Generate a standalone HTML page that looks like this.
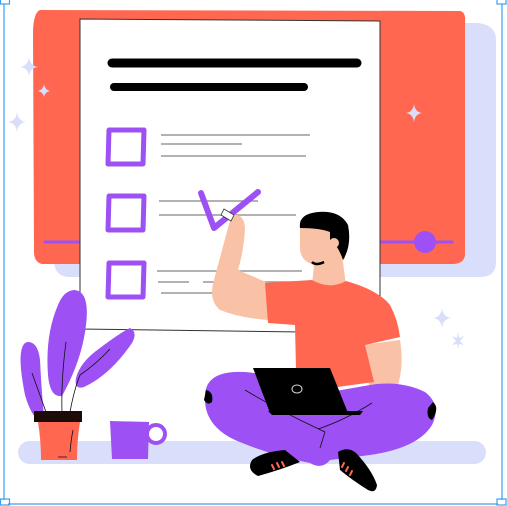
<!DOCTYPE html>
<html><head><meta charset="utf-8"><style>
html,body{margin:0;padding:0;background:#fff;width:507px;height:506px;overflow:hidden}
svg{display:block}
</style></head><body>
<svg width="507" height="506" viewBox="0 0 507 506" xmlns="http://www.w3.org/2000/svg">
<g stroke="#3aa0f0" stroke-width="1.2" fill="none">
<line x1="4" y1="4" x2="4" y2="500"/>
<line x1="502" y1="4" x2="502" y2="500"/>
<line x1="8" y1="504" x2="498" y2="504"/>
<rect x="0.5" y="-2" width="9" height="6"/>
<rect x="497" y="-2" width="9" height="6"/>
<rect x="0.5" y="499" width="9" height="6"/>
<rect x="497" y="499" width="9" height="6"/>
</g>
<path d="M56 30 Q60 22 80 22 L478 23 Q496 25 496 40 L496 262 Q496 277 480 277 L70 277 Q55 277 54 262 Z" fill="#d9dffa"/>
<path d="M40 10 L460 11 Q466 12 465 22 L465 255 Q464 264 452 264 L42 264 Q34 262 34 252 L33 30 Q34 12 40 10 Z" fill="#ff6750"/>
<g fill="#d9dffa">
<path d="M29 57 Q30 66 38 67 Q30 68 29 76 Q28 68 20 67 Q28 66 29 57Z"/>
<path d="M44 84 Q45 90 50 91 Q45 92 44 97 Q43 92 38 91 Q43 90 44 84Z"/>
<path d="M17 112 Q18 121 26 122 Q18 123 17 132 Q16 123 8 122 Q16 121 17 112Z"/>
<path d="M414 104 Q415 112 422 113 Q415 114 414 122 Q413 114 406 113 Q413 112 414 104Z"/>
<path d="M442 308 Q443 317 451 318 Q443 319 442 328 Q441 319 433 318 Q441 317 442 308Z"/>
<path d="M458 331 L459 338 L464 336 L460 341 L464 345 L459 344 L458 349 L457 344 L452 345 L456 341 L452 336 L457 338Z"/>
</g>
<line x1="45" y1="242" x2="452" y2="242" stroke="#9d50f3" stroke-width="3" stroke-linecap="round"/>
<circle cx="425" cy="242" r="11" fill="#9d50f3"/>
<path d="M80 19 L380 21 L380 333 L80 329 Z" fill="#fff" stroke="#333" stroke-width="1"/>
<line x1="112" y1="63" x2="357" y2="63" stroke="#000" stroke-width="9" stroke-linecap="round"/>
<line x1="114" y1="87" x2="304" y2="87" stroke="#000" stroke-width="8" stroke-linecap="round"/>
<g fill="none" stroke="#9d50f3" stroke-width="5" stroke-linejoin="round">
<path d="M109 130 L144 130 L143 164 L108 164 Z"/>
<path d="M109 196 L144 196 L143 230 L108 230 Z"/>
<path d="M109 263 L144 263 L143 297 L108 297 Z"/>
</g>
<g stroke="#999" stroke-width="1.6">
<line x1="161" y1="135" x2="310" y2="135"/>
<line x1="161" y1="144" x2="242" y2="144"/>
<line x1="161" y1="156" x2="306" y2="156"/>
<line x1="159" y1="201" x2="258" y2="201"/>
<line x1="159" y1="215" x2="296" y2="215"/>
<line x1="157" y1="271" x2="302" y2="271"/>
<line x1="158" y1="282" x2="189" y2="282"/>
<line x1="203" y1="282" x2="300" y2="282"/>
<line x1="161" y1="293" x2="300" y2="293"/>
</g>
<path d="M201 193 L214 228 L258 192" fill="none" stroke="#9d50f3" stroke-width="6" stroke-linecap="round" stroke-linejoin="round"/>
<rect x="18" y="441" width="468" height="23" rx="11.5" fill="#d9dffa"/>
<path d="M75 290 Q90 292 86 325 Q82 360 62 396 Q50 398 48 375 Q45 335 58 305 Q64 290 75 290Z" fill="#9d50f3"/>
<path d="M28 342 Q38 342 40 360 Q42 400 45 425 Q32 420 25 395 Q18 360 22 348 Q24 342 28 342Z" fill="#9d50f3"/>
<path d="M130 328 Q138 332 132 343 Q110 375 84 387 Q74 390 76 378 Q80 362 100 348 Q120 333 130 328Z" fill="#9d50f3"/>
<g stroke="#111" stroke-width="0.8" fill="none">
<path d="M32 373 L46 412"/><path d="M66 342 Q61 380 62 412"/><path d="M110 349 Q95 365 80 375 Q74 390 70 412"/>
</g>
<rect x="34" y="411" width="48" height="11" fill="#1c0b06"/>
<path d="M38 422 L80 422 Q77 440 77 460 L41 460 Q41 440 38 422Z" fill="#ff6750"/>
<path d="M73 430 Q71 440 70 452 M58 457 L67 457" stroke="#111" stroke-width="0.8" fill="none"/>
<circle cx="156" cy="434" r="9" fill="none" stroke="#9d50f3" stroke-width="4"/>
<path d="M110 421 L149 422 L148 459 L112 459 Z" fill="#9d50f3"/>
<path d="M232 215 Q244 213 245 228 Q244 250 238 270 L268 283 L268 320 Q240 318 220 310 Q208 300 214 280 Q222 250 228 228 Z" fill="#f9c2a6"/>
<path d="M224 209 L234 215 L231 221 L221 215 Z" fill="#fff" stroke="#333" stroke-width="0.8"/>
<path d="M315 255 L342 255 L346 285 L312 285 Z" fill="#f9c2a6"/>
<path d="M300 222 Q303 213 325 214 Q345 216 345 232 L345 258 Q338 267 320 266 Q302 264 300 250 Z" fill="#f9c2a6"/>
<path d="M300 228 Q298 214 318 212 Q340 210 348 225 Q352 245 343 260 Q338 245 330 240 L330 232 Q320 228 300 228Z" fill="#000"/>
<circle cx="334" cy="243" r="5" fill="#f9c2a6"/>
<path d="M312 262 Q316 266 324 262" stroke="#000" stroke-width="2.5" fill="none"/>
<path d="M362 345 L400 340 Q404 365 398 385 L370 390 Z" fill="#f9c2a6"/>
<path d="M265 283 L312 280 Q330 290 346 281 Q378 290 390 305 Q398 320 400 337 L365 345 L374 382 L330 388 L296 370 L295 325 L268 323 Z" fill="#ff6750"/>
<path d="M205 395 Q206 370 245 372 Q280 375 330 392 L370 385 Q400 380 425 392 Q442 405 432 425 Q418 448 370 455 L330 460 Q322 470 310 463 Q270 455 235 440 Q203 425 205 395Z" fill="#9d50f3"/>
<path d="M206 390 Q214 392 212 402 Q208 406 204 400Z" fill="#000"/>
<path d="M433 402 Q440 408 432 420 Q426 418 428 408Z" fill="#000"/>
<path d="M245 390 Q270 405 300 420 L325 432 L320 448 M318 429 Q345 420 372 403" stroke="#111" stroke-width="0.8" fill="none"/>
<path d="M253 368 L330 368 L348 413 L270 413 Z" fill="#000"/>
<path d="M268 411 L363 411 L360 415 L272 415Z" fill="#000"/>
<ellipse cx="297" cy="389" rx="5" ry="4" fill="none" stroke="#ddd" stroke-width="1"/>
<path d="M252 460 Q262 452 285 450 L300 462 Q280 470 258 476 Q246 470 252 460Z" fill="#000"/>
<path d="M338 452 Q348 446 356 453 Q372 470 377 485 Q376 494 368 490 Q352 480 340 470 Z" fill="#000"/>
<g stroke="#ff6750" stroke-width="2" stroke-linecap="round">
<path d="M272 465 L274 469 M277 463 L279 467 M282 462 L284 466"/>
<path d="M342 467 L344 463 M346 471 L348 467 M350 475 L352 471"/>
</g>
</svg>
</body></html>
